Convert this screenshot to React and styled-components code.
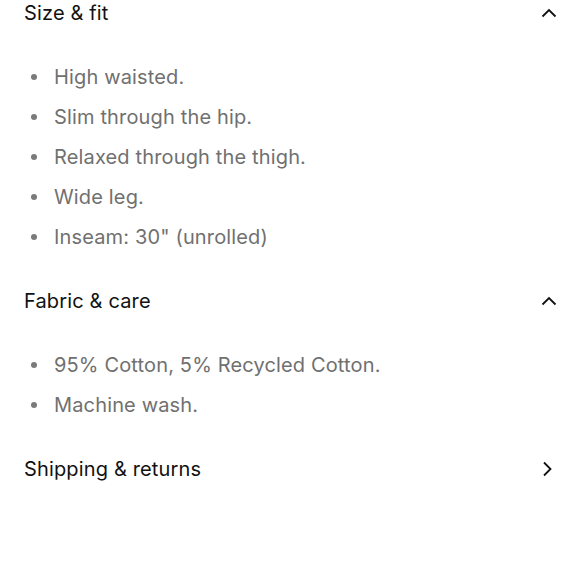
import React from "react";
import styled, { createGlobalStyle } from "styled-components";

const Global = createGlobalStyle`
  html, body { margin: 0; padding: 0; background: #fff; }
  body { font-family: Inter, "Liberation Sans", sans-serif; -webkit-font-smoothing: antialiased; }
`;

const Page = styled.div`
  width: 580px;
  padding: 0 24px;
  box-sizing: border-box;
`;

const Section = styled.section`
  padding-bottom: ${(p) => (p.$open ? "31px" : "0")};
`;

const Header = styled.div`
  display: flex;
  align-items: center;
  justify-content: space-between;
  height: 26px;
`;

const Title = styled.h3`
  margin: 0;
  font-size: 20px;
  font-weight: 400;
  color: #111;
  letter-spacing: 0.15px;
`;

const ChevronBox = styled.span`
  display: flex;
  align-items: center;
  justify-content: center;
  width: 16px;
  height: 20px;
  margin-right: ${(p) => (p.$dir === "up" ? "-1px" : "1px")};
`;

const List = styled.ul`
  list-style: none;
  margin: 0;
  padding: 31px 0 0 0;
`;

const Item = styled.li`
  display: flex;
  align-items: center;
  height: 40px;
  font-size: 20px;
  color: #707070;
  letter-spacing: 0.15px;
`;

const Dot = styled.span`
  width: 6px;
  height: 6px;
  border-radius: 50%;
  background: #7a7a7a;
  margin: 0 17px 0 7px;
  flex: none;
`;

const Chevron = ({ dir }) => (
  <ChevronBox $dir={dir}>
    {dir === "up" ? (
      <svg width="16" height="10" viewBox="0 0 16 10" fill="none">
        <path d="M1.5 8.5L8 2l6.5 6.5" stroke="#111" strokeWidth="1.8" />
      </svg>
    ) : (
      <svg width="10" height="16" viewBox="0 0 10 16" fill="none">
        <path d="M2 1.5L8.5 8 2 14.5" stroke="#111" strokeWidth="1.8" />
      </svg>
    )}
  </ChevronBox>
);

const sections = [
  {
    title: "Size & fit",
    open: true,
    items: [
      "High waisted.",
      "Slim through the hip.",
      "Relaxed through the thigh.",
      "Wide leg.",
      'Inseam: 30" (unrolled)',
    ],
  },
  {
    title: "Fabric & care",
    open: true,
    items: ["95% Cotton, 5% Recycled Cotton.", "Machine wash."],
  },
  { title: "Shipping & returns", open: false, items: [] },
];

export default function App() {
  return (
    <>
      <Global />
      <Page>
        {sections.map((s) => (
          <Section key={s.title} $open={s.open}>
            <Header>
              <Title>{s.title}</Title>
              <Chevron dir={s.open ? "up" : "right"} />
            </Header>
            {s.open && (
              <List>
                {s.items.map((it) => (
                  <Item key={it}>
                    <Dot />
                    {it}
                  </Item>
                ))}
              </List>
            )}
          </Section>
        ))}
      </Page>
    </>
  );
}
